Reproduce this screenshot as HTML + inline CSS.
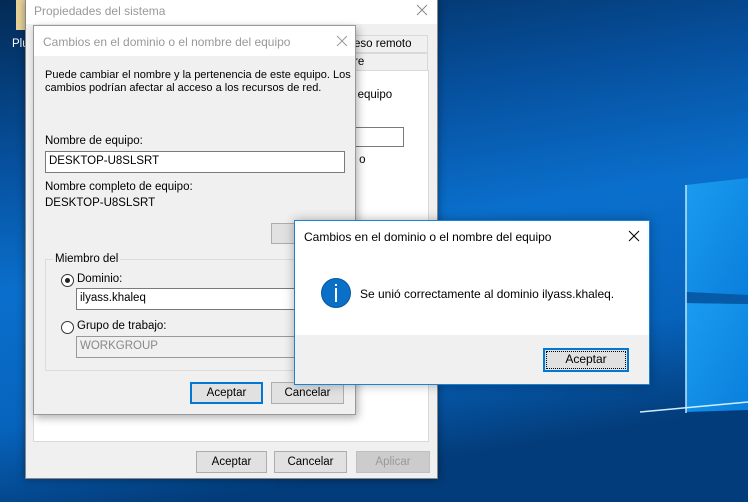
<!DOCTYPE html>
<html><head><meta charset="utf-8"><style>
*{margin:0;padding:0;box-sizing:border-box}
body{width:748px;height:502px;overflow:hidden;position:relative;font-family:"Liberation Sans",sans-serif;font-size:11.5px;color:#000}
.a{position:absolute}
.btn{position:absolute;background:#e1e1e1;border:1px solid #adadad;text-align:center;line-height:20px;font-size:11.5px}
.inp{position:absolute;background:#fff;border:1px solid #7a7a7a;padding-left:3px;line-height:19px;font-size:11.5px}
.t{position:absolute;white-space:nowrap;font-size:11.5px}
</style></head><body>
<svg class="a" style="left:0;top:0" width="748" height="502">
<defs>
<linearGradient id="bg" x1="0" y1="0" x2="0.25" y2="1">
<stop offset="0" stop-color="#032a55"/><stop offset="0.3" stop-color="#064f9c"/><stop offset="0.55" stop-color="#0a6fcc"/><stop offset="0.8" stop-color="#0764bd"/><stop offset="1" stop-color="#033c7a"/></linearGradient>
<linearGradient id="pn" x1="0" y1="0" x2="1" y2="1"><stop offset="0" stop-color="#1a9cf0"/><stop offset="1" stop-color="#0a7fdc"/></linearGradient>
</defs>
<rect width="748" height="502" fill="url(#bg)"/>
<polygon points="686,185 748,178 748,295 686,292" fill="url(#pn)"/>
<polygon points="686,303 748,304 748,410 686,412" fill="url(#pn)"/>
<polygon points="686,292 748,295 748,304 686,303" fill="#075aa8"/>
<line x1="686" y1="185" x2="686" y2="413" stroke="#bfe6ff" stroke-width="1.5"/>
<line x1="640" y1="412" x2="748" y2="402" stroke="#cdeeff" stroke-width="1.5"/>
<rect x="16" y="0" width="9" height="30" fill="#e8d39a"/>
</svg>
<div class="t" style="left:12px;top:38px;color:#fff">Plu</div>

<div class="a" style="left:25px;top:-1px;width:413px;height:480px;background:#f0f0f0;border:1px solid #888;box-shadow:0 0 8px rgba(0,0,0,.4)">
 <div class="a" style="left:0;top:0;width:411px;height:24px;background:#fff"></div>
 <div class="t" style="left:8px;top:4px;color:#999;font-size:12px">Propiedades del sistema</div>
 <svg class="a" style="left:390px;top:4px" width="12" height="12"><path d="M1 1L11 11M11 1L1 11" stroke="#888" stroke-width="1"/></svg>
 <div class="a" style="left:300px;top:35px;width:102px;height:18px;border:1px solid #d9d9d9;background:#f0f0f0"></div>
 <div class="t" style="left:328px;top:38px">eso remoto</div>
 <div class="a" style="left:300px;top:53px;width:102px;height:18px;border:1px solid #d9d9d9"></div>
 <div class="t" style="left:328px;top:56px">re</div>
 <div class="a" style="left:7px;top:70px;width:396px;height:372px;background:#fff;border:1px solid #d9d9d9"></div>
 <div class="t" style="left:322px;top:89px">u equipo</div>
 <div class="a" style="left:300px;top:127px;width:78px;height:20px;border:1px solid #7a7a7a;background:#fff"></div>
 <div class="t" style="left:322px;top:154px">r" o</div>
 <div class="btn" style="left:170px;top:451px;width:71px;height:22px">Aceptar</div>
 <div class="btn" style="left:248px;top:451px;width:73px;height:22px">Cancelar</div>
 <div class="btn" style="left:330px;top:451px;width:74px;height:22px;color:#999;background:#ccc;border-color:#bfbfbf">Aplicar</div>
</div>

<div class="a" style="left:33px;top:25px;width:323px;height:390px;background:#f0f0f0;border:1px solid #999;box-shadow:2px 3px 8px rgba(0,0,0,.3)">
 <div class="a" style="left:0;top:0;width:321px;height:30px;background:#fff"></div>
 <div class="t" style="left:9px;top:9px;color:#999;font-size:12px">Cambios en el dominio o el nombre del equipo</div>
 <svg class="a" style="left:302px;top:9px" width="12" height="12"><path d="M1 1L11 11M11 1L1 11" stroke="#999" stroke-width="1"/></svg>
 <div class="t" style="left:11px;top:43px;line-height:13px;font-size:11px">Puede cambiar el nombre y la pertenencia de este equipo. Los<br>cambios podrían afectar al acceso a los recursos de red.</div>
 <div class="t" style="left:11px;top:109px">Nombre de equipo:</div>
 <div class="inp" style="left:11px;top:125px;width:300px;height:22px">DESKTOP-U8SLSRT</div>
 <div class="t" style="left:11px;top:155px">Nombre completo de equipo:</div>
 <div class="t" style="left:11px;top:171px">DESKTOP-U8SLSRT</div>
 <div class="btn" style="left:237px;top:197px;width:80px;height:21px"></div>
 <div class="a" style="left:11px;top:233px;width:310px;height:112px;border:1px solid #dcdcdc"></div>
 <div class="t" style="left:19px;top:227px;background:#f0f0f0;padding:0 2px">Miembro del</div>
 <div class="a" style="left:27px;top:248px;width:13px;height:13px;border:1px solid #333;border-radius:50%;background:#fff"><div class="a" style="left:3px;top:3px;width:5px;height:5px;border-radius:50%;background:#222"></div></div>
 <div class="t" style="left:43px;top:247px">Dominio:</div>
 <div class="inp" style="left:42px;top:262px;width:230px;height:22px">ilyass.khaleq</div>
 <div class="a" style="left:27px;top:295px;width:13px;height:13px;border:1px solid #333;border-radius:50%;background:#fff"></div>
 <div class="t" style="left:43px;top:294px">Grupo de trabajo:</div>
 <div class="inp" style="left:42px;top:310px;width:230px;height:22px;background:#f0f0f0;color:#888;border-color:#999">WORKGROUP</div>
 <div class="btn" style="left:156px;top:356px;width:73px;height:22px;border:2px solid #0078d7;line-height:18px">Aceptar</div>
 <div class="btn" style="left:237px;top:356px;width:73px;height:22px">Cancelar</div>
</div>

<div class="a" style="left:294px;top:220px;width:356px;height:165px;background:#fff;border:1px solid #1883d7;box-shadow:0 0 10px rgba(0,0,0,.3)">
 <div class="t" style="left:9px;top:9px;font-size:12px">Cambios en el dominio o el nombre del equipo</div>
 <svg class="a" style="left:333px;top:9px" width="12" height="12"><path d="M1 1L11 11M11 1L1 11" stroke="#000" stroke-width="1"/></svg>
 <div class="a" style="left:26px;top:57px;width:30px;height:30px;border-radius:50%;background:#0a6fc6;border:1px solid #0658a3"></div>
 <div class="a" style="left:40px;top:63px;width:2px;height:2px;background:#fff"></div>
 <div class="a" style="left:40px;top:67px;width:2px;height:14px;background:#fff"></div>
 <div class="t" style="left:65px;top:66px;font-size:12px">Se unió correctamente al dominio ilyass.khaleq.</div>
 <div class="a" style="left:0;top:114px;width:354px;height:49px;background:#f0f0f0"></div>
 <div class="btn" style="left:248px;top:127px;width:86px;height:24px;border:2px solid #0078d7;line-height:19px;outline:1px dotted #000;outline-offset:-4px;font-size:12px">Aceptar</div>
</div>
</body></html>
